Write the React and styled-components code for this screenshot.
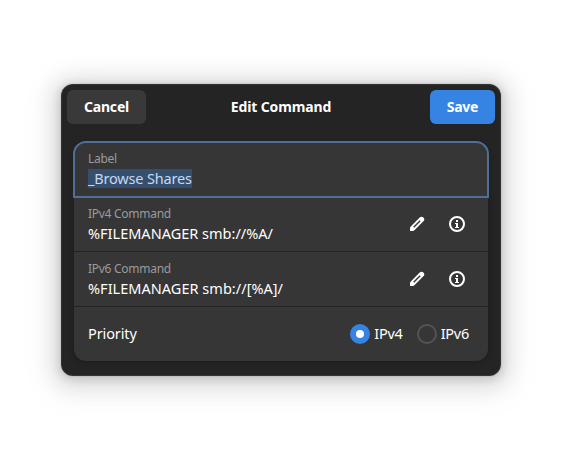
import React from 'react';
import styled, { createGlobalStyle } from 'styled-components';

const GlobalStyle = createGlobalStyle`
  * { box-sizing: border-box; }
  body { margin: 0; background: #fff; }
  button { font: inherit; color: inherit; border: 0; padding: 0; background: none; }
`;

const Page = styled.main`
  width: 562px;
  height: 473px;
  padding: 84px 61px;
  overflow: hidden;
  font: 15px/20px 'Noto Sans', sans-serif;
  color: #fff;
`;

const Dialog = styled.section`
  width: 440px;
  height: 292px;
  border-radius: 12px;
  background: #242424;
  box-shadow:
    inset 0 0 0 1px rgba(255, 255, 255, 0.07),
    0 2px 8px 2px rgba(0, 0, 0, 0.13),
    0 3px 20px 10px rgba(0, 0, 0, 0.09),
    0 6px 32px 16px rgba(0, 0, 0, 0.04),
    0 0 0 1px rgba(0, 0, 0, 0.05);
`;

const Header = styled.header`
  display: grid;
  grid-template-columns: 79px 1fr 65px;
  align-items: center;
  height: 46px;
  padding: 0 6px;
`;

const Text = styled.span`
  display: block;
  width: max-content;
  white-space: pre;
  font-size: ${({ $size }) => $size || 14.5}px;
  font-weight: ${({ $bold }) => ($bold ? 700 : 400)};
  letter-spacing: ${({ $track }) => $track || 0}px;
`;

const Title = styled(Text)`
  justify-self: center;
  margin-right: 14px;
`;

const HeaderButton = styled.button`
  && {
    display: flex;
    align-items: center;
    justify-content: center;
    height: 34px;
    border-radius: 6px;
    background: ${({ $primary }) => ($primary ? '#3584e4' : '#393939')};
  }
`;

const List = styled.div`
  width: 414px;
  margin: 12px 0 0 13px;
  border-radius: 12px;
  background: #363636;
  box-shadow: 0 1px 3px 1px rgba(0, 0, 0, 0.12), 0 2px 6px 2px rgba(0, 0, 0, 0.04);
`;

const Row = styled.div`
  display: flex;
  align-items: center;
  justify-content: space-between;
  height: 55px;
  padding: 0 18px 0 14px;
  border-bottom: 1px solid #242424;

  &:last-child {
    height: 54px;
    padding-right: 19px;
    border-bottom: 0;
  }
`;

const FocusedRow = styled(Row)`
  outline: 2px solid #4f6f98;
  outline-offset: -1px;
  border-radius: 12px 12px 0 0;
  border-bottom-color: transparent;
`;

const Field = styled.div`
  padding-bottom: 1px;
`;

const Caption = styled(Text)`
  line-height: 18px;
  color: #9b9b9b;
`;

const Value = styled(Text)`
  margin-top: 1px;
  line-height: 19px;
`;

const SelectedValue = styled(Value)`
  background: #364f6e;
  color: #c6d9f2;
`;

const Actions = styled.div`
  display: flex;
  gap: 24px;
  padding-right: 5px;
`;

const IconButton = styled.button`
  width: 16px;
  height: 16px;

  svg { display: block; }
`;

const Choices = styled.div`
  display: flex;
  gap: 14px;
`;

const Choice = styled.label`
  display: flex;
  align-items: center;
  gap: 4px;
`;

const RowText = styled(Text)`
  padding-bottom: 2px;
`;

const Radio = styled.span`
  display: grid;
  place-items: center;
  width: 20px;
  height: 20px;
  border-radius: 50%;
  border: ${({ $checked }) => ($checked ? '0' : '2px solid #545454')};
  background: ${({ $checked }) => ($checked ? '#3584e4' : 'transparent')};

  &::after {
    content: '';
    width: 8px;
    height: 8px;
    border-radius: 50%;
    background: ${({ $checked }) => ($checked ? '#fff' : 'transparent')};
  }
`;

const PencilIcon = () => (
  <svg width="16" height="16" viewBox="0 0 16 16">
    <path
      fill="#fff"
      fillRule="evenodd"
      d="M10.7 1.6a2.6 2.6 0 0 1 3.7 3.7L5.4 14.2l-1.2.8H1v-3.2l.8-1.2zM10.7 4.3 4.2 10.8l1 1 6.5-6.5z"
    />
  </svg>
);

const InfoIcon = () => (
  <svg width="16" height="16" viewBox="0 0 16 16">
    <circle cx="8" cy="8" r="7" fill="none" stroke="#fff" strokeWidth="2" />
    <path fill="#fff" d="M7 4h2v2H7zM6 7h3v4h1v1H6v-1h1V8H6z" />
  </svg>
);

const commands = [
  { label: 'IPv4 Command', value: '%FILEMANAGER smb://%A/', track: 0.01 },
  { label: 'IPv6 Command', value: '%FILEMANAGER smb://[%A]/', track: 0.03 },
];

export default function App() {
  return (
    <>
      <GlobalStyle />
      <Page>
        <Dialog>
          <Header>
            <HeaderButton><Text $bold $size={14} $track={-0.2}>Cancel</Text></HeaderButton>
            <Title $bold $size={14} $track={-0.14}>Edit Command</Title>
            <HeaderButton $primary><Text $bold $size={14} $track={-0.25}>Save</Text></HeaderButton>
          </Header>
          <List>
            <FocusedRow>
              <Field>
                <Caption $size={12} $track={-0.3}>Label</Caption>
                <SelectedValue $track={-0.18}>_Browse Shares</SelectedValue>
              </Field>
            </FocusedRow>
            {commands.map(({ label, value, track }) => (
              <Row key={label}>
                <Field>
                  <Caption $size={12} $track={-0.27}>{label}</Caption>
                  <Value $track={track}>{value}</Value>
                </Field>
                <Actions>
                  <IconButton aria-label="Edit"><PencilIcon /></IconButton>
                  <IconButton aria-label="Info"><InfoIcon /></IconButton>
                </Actions>
              </Row>
            ))}
            <Row>
              <RowText $track={-0.12}>Priority</RowText>
              <Choices>
                <Choice><Radio $checked /><RowText $track={-0.25}>IPv4</RowText></Choice>
                <Choice><Radio /><RowText $track={-0.25}>IPv6</RowText></Choice>
              </Choices>
            </Row>
          </List>
        </Dialog>
      </Page>
    </>
  );
}
